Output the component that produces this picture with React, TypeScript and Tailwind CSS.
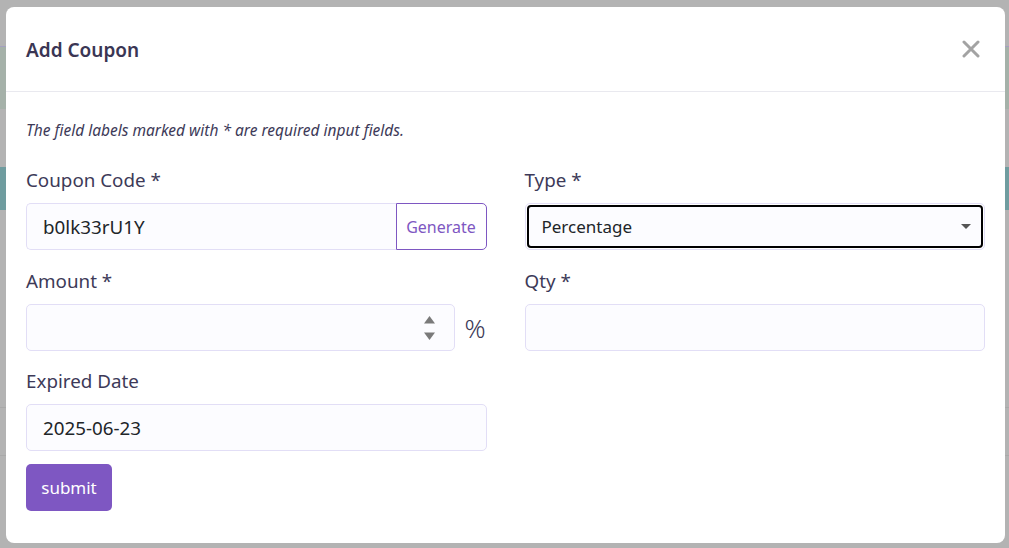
import { useState } from 'react'

const font = { fontFamily: '"Noto Sans", "Open Sans", sans-serif' }

function CloseIcon() {
  return (
    <svg width="18" height="18" viewBox="0 0 18 18" className="text-[#a3a3a3]">
      <path d="M2 2 L16 16 M16 2 L2 16" stroke="currentColor" strokeWidth="3" strokeLinecap="round" />
    </svg>
  )
}

function Label({ children }: { children: React.ReactNode }) {
  return <label className="mb-[11px] block h-6 text-[18.8px] leading-6 text-[#3d3a58]">{children}</label>
}

const inputBox =
  'h-[47px] w-full rounded-[5px] border border-[#e2def6] bg-[#fcfcff] px-4 text-[18.8px] text-[#212529] outline-none'

function Backdrop() {
  // dimmed page rows behind the dialog
  return (
    <div className="flex h-[548px] w-[1009px] flex-col bg-[#b3b3b3]">
      <div className="h-[47px] border-b border-[#a4a0bf]" />
      <div className="h-[62px] bg-[#a5b1a9]" />
      <div className="h-[58px]" />
      <div className="h-[43px] bg-[#6f9c9f]" />
      <div className="h-[197px]" />
      <div className="h-[48px] border-t border-[#a9a9a9]" />
      <div className="h-[60px] border-t border-[#a9a9a9]" />
    </div>
  )
}

export default function App() {
  const [code, setCode] = useState('b0lk33rU1Y')
  const [date, setDate] = useState('2025-06-23')

  const generate = () => {
    const chars = 'abcdefghijklmnopqrstuvwxyzABCDEFGHIJKLMNOPQRSTUVWXYZ0123456789'
    let out = ''
    for (let i = 0; i < 10; i++) out += chars[Math.floor(Math.random() * chars.length)]
    setCode(out)
  }

  return (
    <div className="relative h-[548px] w-[1009px] overflow-hidden" style={font}>
      <Backdrop />
      <div className="absolute inset-0 pl-[6px] pt-[7px]">
        <div className="flex h-[536px] w-[999px] flex-col rounded-[8px] bg-white">
          <div className="flex h-[85px] items-center justify-between border-b border-[#e9e9ef] pl-5 pr-[25px]">
            <h2 className="pt-[3px] text-[19px] font-semibold text-[#3a3654]">Add Coupon</h2>
            <button className="flex items-center">
              <CloseIcon />
            </button>
          </div>

          <div className="px-5 pt-[28px]">
            <p className="text-[15.5px] italic leading-5 text-[#3d3a58]">
              The field labels marked with * are required input fields.
            </p>

            <div className="mt-[28px] grid grid-cols-2 gap-x-[38px]">
              <div className="mb-[19px]">
                <Label>Coupon Code *</Label>
                <div className="flex h-[47px]">
                  <input
                    value={code}
                    onChange={(e) => setCode(e.target.value)}
                    className="h-[47px] min-w-0 flex-1 rounded-l-[5px] border border-r-0 border-[#e2def6] bg-[#fcfcff] px-4 text-[18.8px] text-[#212529] outline-none"
                  />
                  <button
                    onClick={generate}
                    className="h-[47px] w-[91px] rounded-r-[5px] border border-[#7e57c2] bg-white text-[16px] text-[#7e57c2]"
                  >
                    Generate
                  </button>
                </div>
              </div>

              <div className="mb-[19px]">
                <Label>Type *</Label>
                <div className="h-[47px] rounded-[5px] border border-[#e2def6] p-px">
                  <div className="flex h-full items-center justify-between rounded-[4px] border-2 border-black bg-[#fcfcff] pl-[13px] pr-[10px]">
                    <span className="text-[17px] text-[#212529]">Percentage</span>
                    <svg width="10" height="6" viewBox="0 0 10 6">
                      <path d="M0 0 L10 0 L5 5 Z" fill="#555" />
                    </svg>
                  </div>
                </div>
              </div>

              <div className="mb-[18px]">
                <Label>Amount *</Label>
                <div className="flex items-center">
                  <div className="flex h-[47px] flex-1 items-center rounded-[5px] border border-[#e2def6] bg-[#fcfcff] pr-[18px]">
                    <input className="h-full min-w-0 flex-1 bg-transparent px-4 text-[18.8px] outline-none" />
                    <svg width="13" height="26" viewBox="0 0 13 26">
                      <path d="M6.5 1 L12 8.5 L1 8.5 Z" fill="#7a7a7a" />
                      <path d="M1 17.5 L12 17.5 L6.5 25 Z" fill="#7a7a7a" />
                    </svg>
                  </div>
                  <span className="ml-[10px] w-[22px] text-[26px] font-light leading-none text-[#3d3a58]">%</span>
                </div>
              </div>

              <div className="mb-[18px]">
                <Label>Qty *</Label>
                <input className={inputBox} />
              </div>

              <div className="mb-[13px]">
                <Label>Expired Date</Label>
                <input value={date} onChange={(e) => setDate(e.target.value)} className={inputBox} />
              </div>
              <div />
            </div>

            <button className="h-[47px] w-[86px] rounded-[5px] bg-[#7e57c2] text-[17px] text-white">submit</button>
          </div>
        </div>
      </div>
    </div>
  )
}
